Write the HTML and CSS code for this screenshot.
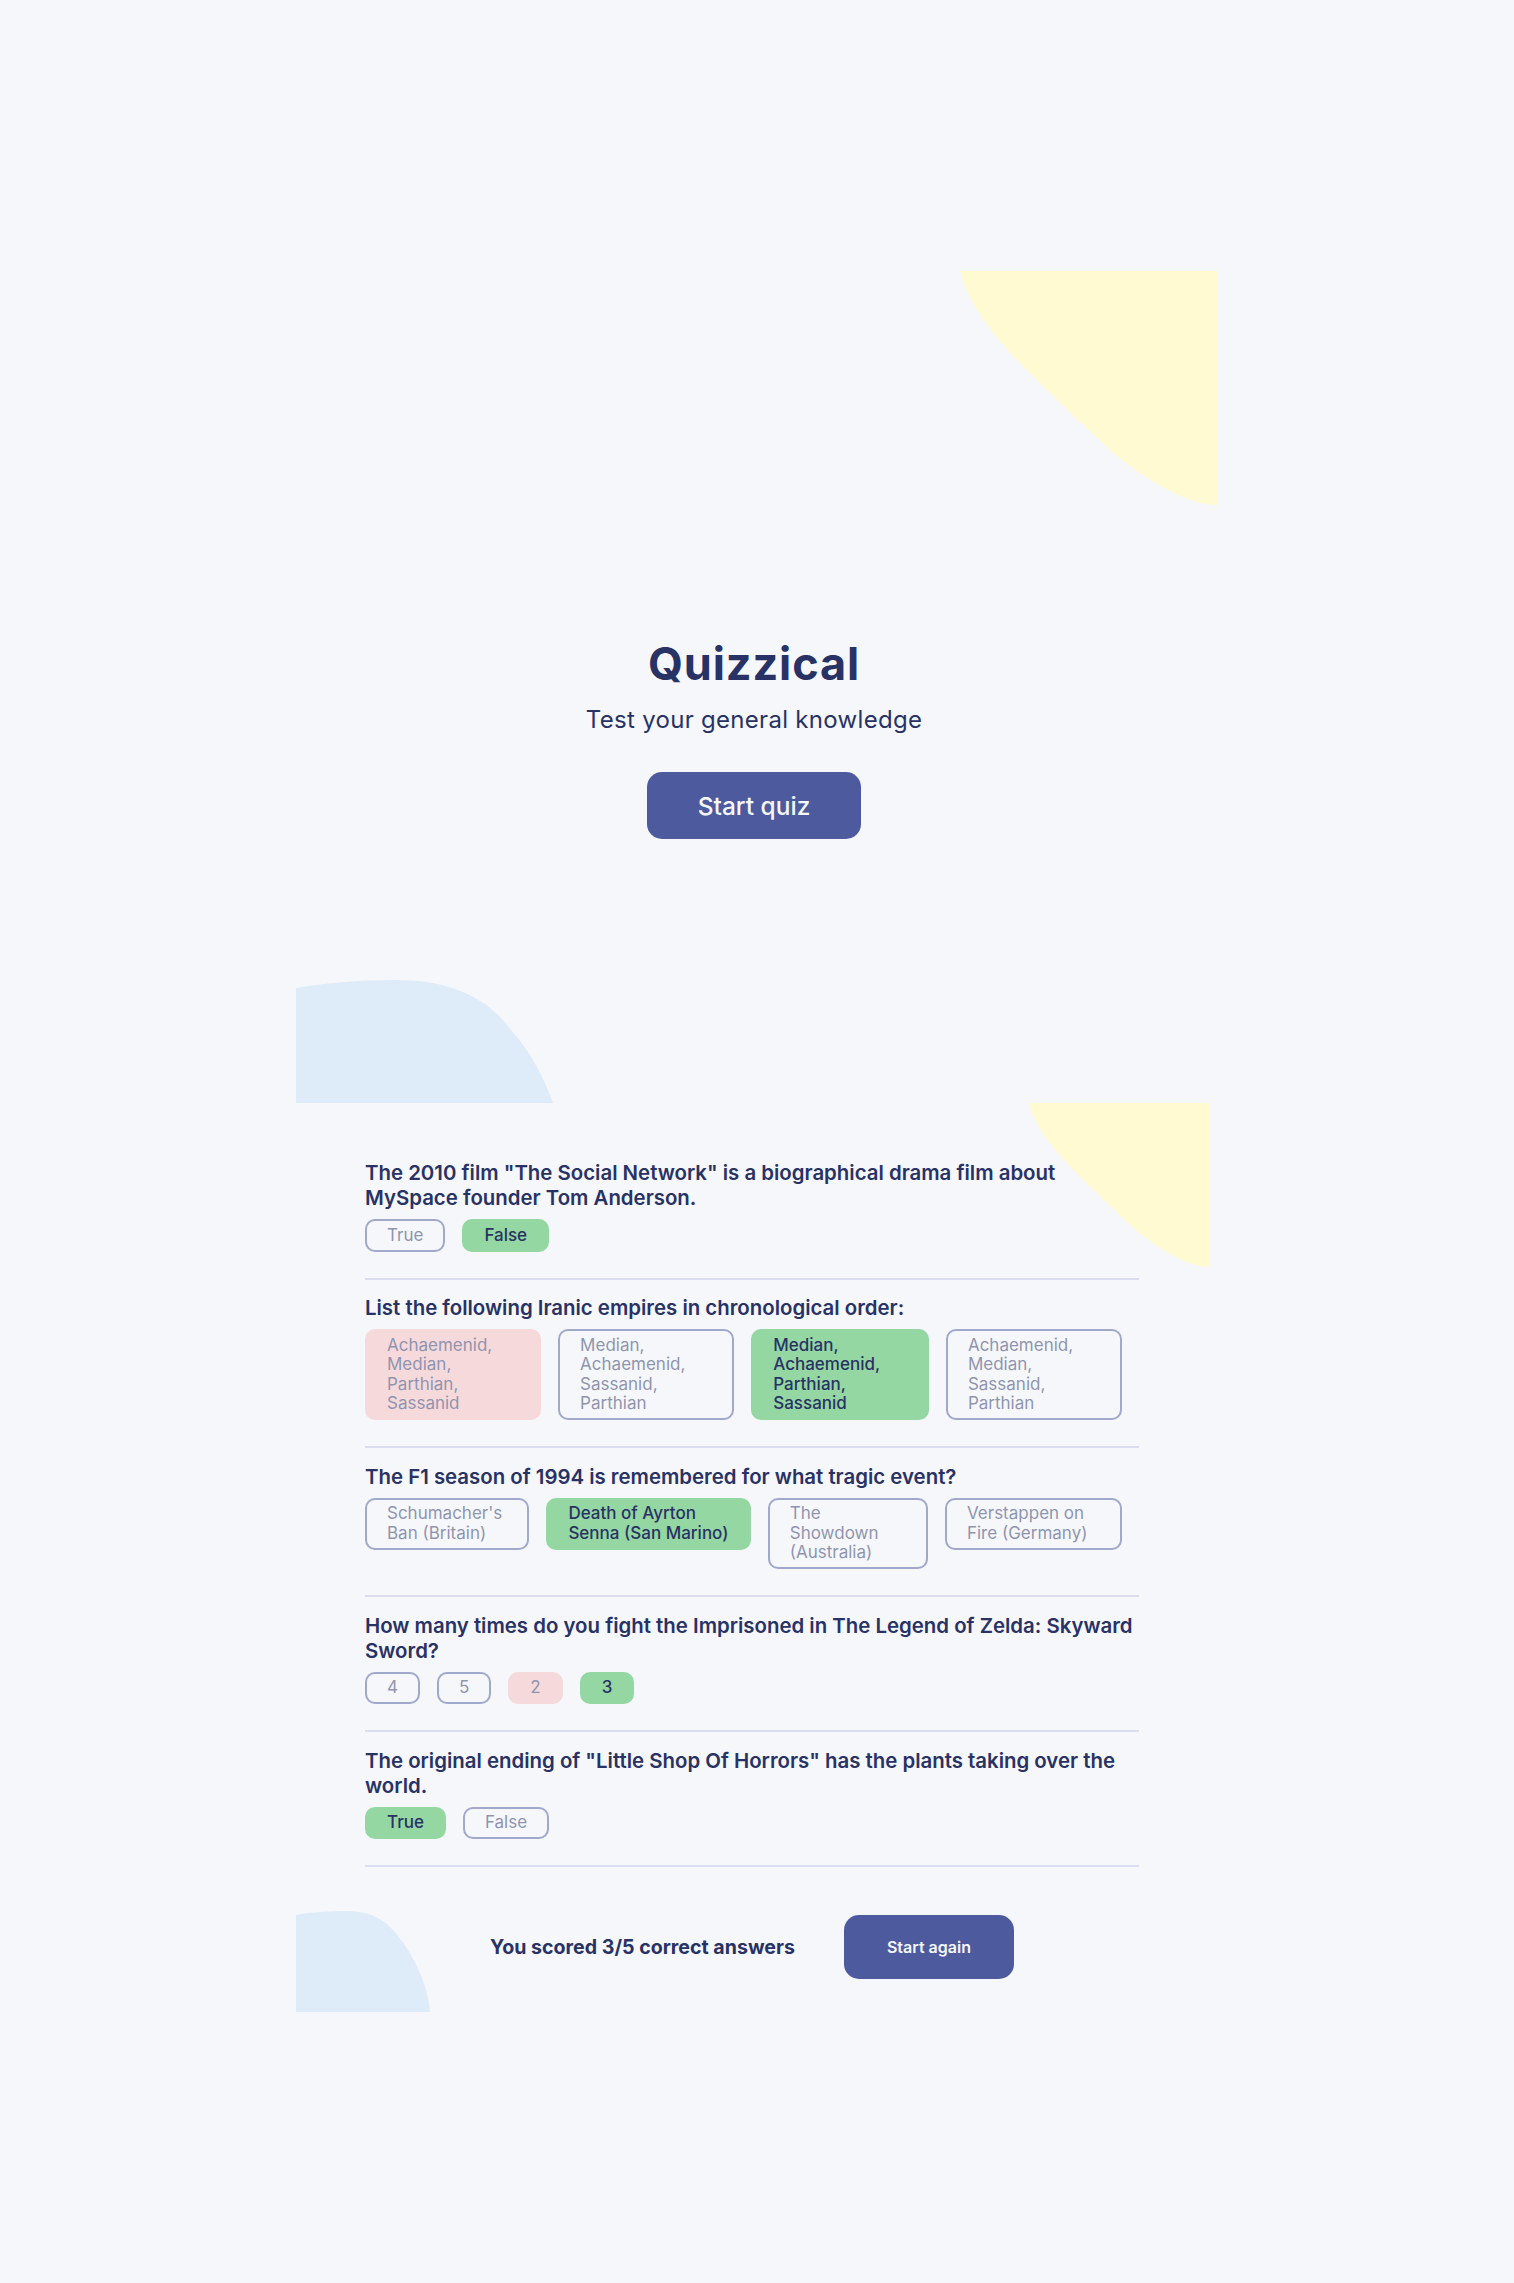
FILE: index.html
```html
<!DOCTYPE html>
<html lang="en">
<head>
<meta charset="utf-8">
<title>Quizzical</title>
<link rel="stylesheet" href="styles.css">
</head>
<body>
<main class="app">
  <section class="start">
    <svg class="blob blob-yellow-lg" viewBox="0 0 258 234" preserveAspectRatio="none" aria-hidden="true"><path d="M0 0H258V234C225 234 180 205 150 179C127 157 103 135 80 112C45 78 10 40 0 0Z"/></svg>
    <svg class="blob blob-blue-lg" viewBox="0 0 257 123" preserveAspectRatio="none" aria-hidden="true"><path d="M0 123V8C30 3 60 0 100 0C160 0 195 22 215 50C235 72 248 98 257 123Z"/></svg>
    <h1 class="title">Quizzical</h1>
    <p class="subtitle">Test your general knowledge</p>
    <button class="btn btn-start">Start quiz</button>
  </section>

  <section class="quiz">
    <svg class="blob blob-yellow-sm" viewBox="0 0 258 234" preserveAspectRatio="none" aria-hidden="true"><path d="M0 0H258V234C225 234 180 205 150 179C127 157 103 135 80 112C45 78 10 40 0 0Z"/></svg>
    <svg class="blob blob-blue-sm" viewBox="0 0 134 101" preserveAspectRatio="none" aria-hidden="true"><path d="M0 101V4C15 1 32 0 49 0C70 0 85 6 96 18C118 42 132 75 134 101Z"/></svg>

    <div class="question">
      <h2 class="q-text">The 2010 film &quot;The Social Network&quot; is a biographical drama film about MySpace founder Tom Anderson.</h2>
      <div class="answers">
        <button class="answer">True</button>
        <button class="answer correct">False</button>
      </div>
    </div>

    <div class="question">
      <h2 class="q-text">List the following Iranic empires in chronological order:</h2>
      <div class="answers">
        <button class="answer wrong">Achaemenid, Median, Parthian, Sassanid</button>
        <button class="answer">Median, Achaemenid, Sassanid, Parthian</button>
        <button class="answer correct">Median, Achaemenid, Parthian, Sassanid</button>
        <button class="answer">Achaemenid, Median, Sassanid, Parthian</button>
      </div>
    </div>

    <div class="question">
      <h2 class="q-text">The F1 season of 1994 is remembered for what tragic event?</h2>
      <div class="answers">
        <button class="answer">Schumacher's Ban (Britain)</button>
        <button class="answer correct">Death of Ayrton Senna (San Marino)</button>
        <button class="answer">The Showdown (Australia)</button>
        <button class="answer">Verstappen on Fire (Germany)</button>
      </div>
    </div>

    <div class="question">
      <h2 class="q-text">How many times do you fight the Imprisoned in The Legend of Zelda: Skyward Sword?</h2>
      <div class="answers">
        <button class="answer">4</button>
        <button class="answer">5</button>
        <button class="answer wrong">2</button>
        <button class="answer correct">3</button>
      </div>
    </div>

    <div class="question">
      <h2 class="q-text">The original ending of &quot;Little Shop Of Horrors&quot; has the plants taking over the world.</h2>
      <div class="answers">
        <button class="answer correct">True</button>
        <button class="answer">False</button>
      </div>
    </div>

    <div class="score-row">
      <p class="score">You scored 3/5 correct answers</p>
      <button class="btn btn-again">Start again</button>
    </div>
  </section>
</main>
</body>
</html>
```

FILE: styles.css
```css
* { box-sizing: border-box; }

body {
  margin: 0;
  background: #F5F7FB;
  color: #293264;
  font-family: Inter, "Noto Sans", "DejaVu Sans", sans-serif;
}

.blob { position: absolute; z-index: 0; }
.blob-yellow-lg, .blob-yellow-sm { fill: #FFFAD1; }
.blob-blue-lg, .blob-blue-sm { fill: #DEEBF8; }

.blob-yellow-lg { top: 0; right: 0; width: 258px; height: 234px; }
.blob-blue-lg { left: 0; bottom: 0; width: 257px; height: 123px; }
.blob-yellow-sm { top: 0; right: 0; width: 181px; height: 164px; }
.blob-blue-sm { left: 0; bottom: 0; width: 134px; height: 101px; }

.start {
  position: relative;
  width: 922px;
  height: 832px;
  margin: 271px 0 0 calc(50% - 461px);
  padding: 365px 6px 0 0;
  display: flex;
  flex-direction: column;
  align-items: center;
}

.title {
  position: relative;
  margin: 0;
  font-size: 45px;
  line-height: 55px;
  font-weight: 700;
  letter-spacing: 0.9px;
}

.subtitle {
  position: relative;
  margin: 15px 0 0;
  font-size: 24px;
  line-height: 28px;
  font-weight: 400;
  letter-spacing: 0.3px;
}

.btn {
  position: relative;
  border: none;
  background: #4D5B9E;
  color: #F5F7FB;
  font-family: inherit;
  cursor: pointer;
}

.btn-start {
  margin-top: 38px;
  width: 214px;
  height: 67px;
  border-radius: 15px;
  font-size: 24.5px;
  font-weight: 500;
}

.quiz {
  position: relative;
  width: 914px;
  margin-left: calc(50% - 461px);
  padding: 41.5px 71px 33px 69px;
}

.question {
  position: relative;
  z-index: 1;
  padding: 15.5px 0 26px;
  border-bottom: 2px solid #DBDEF0;
}

.q-text {
  margin: 0 0 9px;
  font-size: 20.4px;
  line-height: 25px;
  font-weight: 600;
}

.answers {
  display: flex;
  align-items: flex-start;
}

.answer {
  margin-right: 17px;
  padding: 4.5px 20px;
  border: 2px solid #4D5B9E;
  border-radius: 10px;
  background: transparent;
  color: #293264;
  font-family: inherit;
  font-size: 17px;
  line-height: 19.5px;
  font-weight: 400;
  text-align: left;
  opacity: 0.5;
}

.answer.correct {
  background: #94D7A2;
  border-color: #94D7A2;
  font-weight: 500;
  opacity: 1;
}

.answer.wrong {
  background: #F8BCBC;
  border-color: #F8BCBC;
}

.score-row {
  position: relative;
  z-index: 1;
  display: flex;
  justify-content: center;
  align-items: center;
  gap: 49px;
  margin-top: 48px;
}

.score {
  margin: 0;
  font-size: 19.6px;
  font-weight: 700;
}

.btn-again {
  width: 170px;
  height: 64px;
  border-radius: 15px;
  font-size: 16px;
  font-weight: 600;
}
```
